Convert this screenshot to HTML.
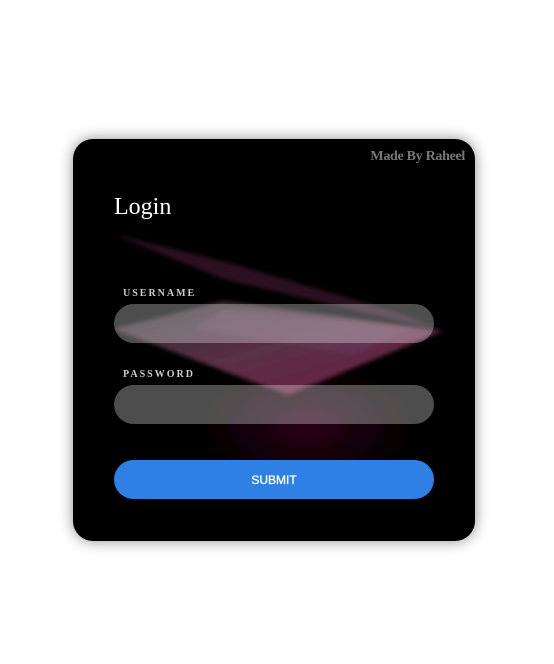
<!DOCTYPE html>
<html><head><style>
body{margin:0;width:554px;height:664px;background:#fff;position:relative;overflow:hidden;font-family:"Liberation Serif",serif}
.card{position:absolute;left:73px;top:139px;width:402px;height:402px;border-radius:20px;background:#000;overflow:hidden;box-shadow:0 0 14px rgba(0,0,0,.45)}
.made{position:absolute;right:10px;top:10px;color:#777;font-weight:bold;font-size:14px;letter-spacing:-.3px}
.login{position:absolute;left:41px;top:55px;color:#fff;font-size:24px}
.lbl{position:absolute;left:50px;color:#ccc;font-size:10px;font-weight:bold;letter-spacing:2px}
.in{position:absolute;left:41px;width:320px;height:39px;border-radius:20px;background:rgba(255,255,255,.3)}
.btn{position:absolute;left:41px;top:321px;width:320px;height:39px;border-radius:20px;background:#2f80e4;color:#fff;font-family:"Liberation Sans",sans-serif;font-size:12px;text-align:center;line-height:40px;-webkit-text-stroke:.3px #fff}
</style></head><body>
<div class="card">
<svg width="402" height="402" style="position:absolute;left:0;top:0">
<defs>
<linearGradient id="g" x1="0" y1="0" x2="1" y2="1"><stop offset="0" stop-color="#2a2a2a"/><stop offset=".5" stop-color="#5a3045"/><stop offset="1" stop-color="#701845"/></linearGradient>
<radialGradient id="r" cx=".55" cy=".6" r=".5"><stop offset="0" stop-color="#4a0525" stop-opacity=".7"/><stop offset="1" stop-color="#000" stop-opacity="0"/></radialGradient>
<filter id="b"><feGaussianBlur stdDeviation="2"/></filter>
<filter id="b2"><feGaussianBlur stdDeviation="12"/></filter>
</defs>
<ellipse cx="220" cy="270" rx="150" ry="80" fill="url(#r)" filter="url(#b2)"/>
<polygon points="40,190 150,162 370,192 215,256" fill="url(#g)" filter="url(#b)"/>
<polygon points="40,95 160,125 330,175 370,192 150,140" fill="#4a1a38" opacity=".6" filter="url(#b)"/>
<polygon points="150,170 340,190 280,215 120,190" fill="#6a4a6a" opacity=".35" filter="url(#b)"/>
</svg>
<div class="made">Made By Raheel</div>
<div class="login">Login</div>
<div class="lbl" style="top:149px">USERNAME</div>
<div class="in" style="top:165px"></div>
<div class="lbl" style="top:230px">PASSWORD</div>
<div class="in" style="top:246px"></div>
<div class="btn">SUBMIT</div>
</div>
</body></html>
